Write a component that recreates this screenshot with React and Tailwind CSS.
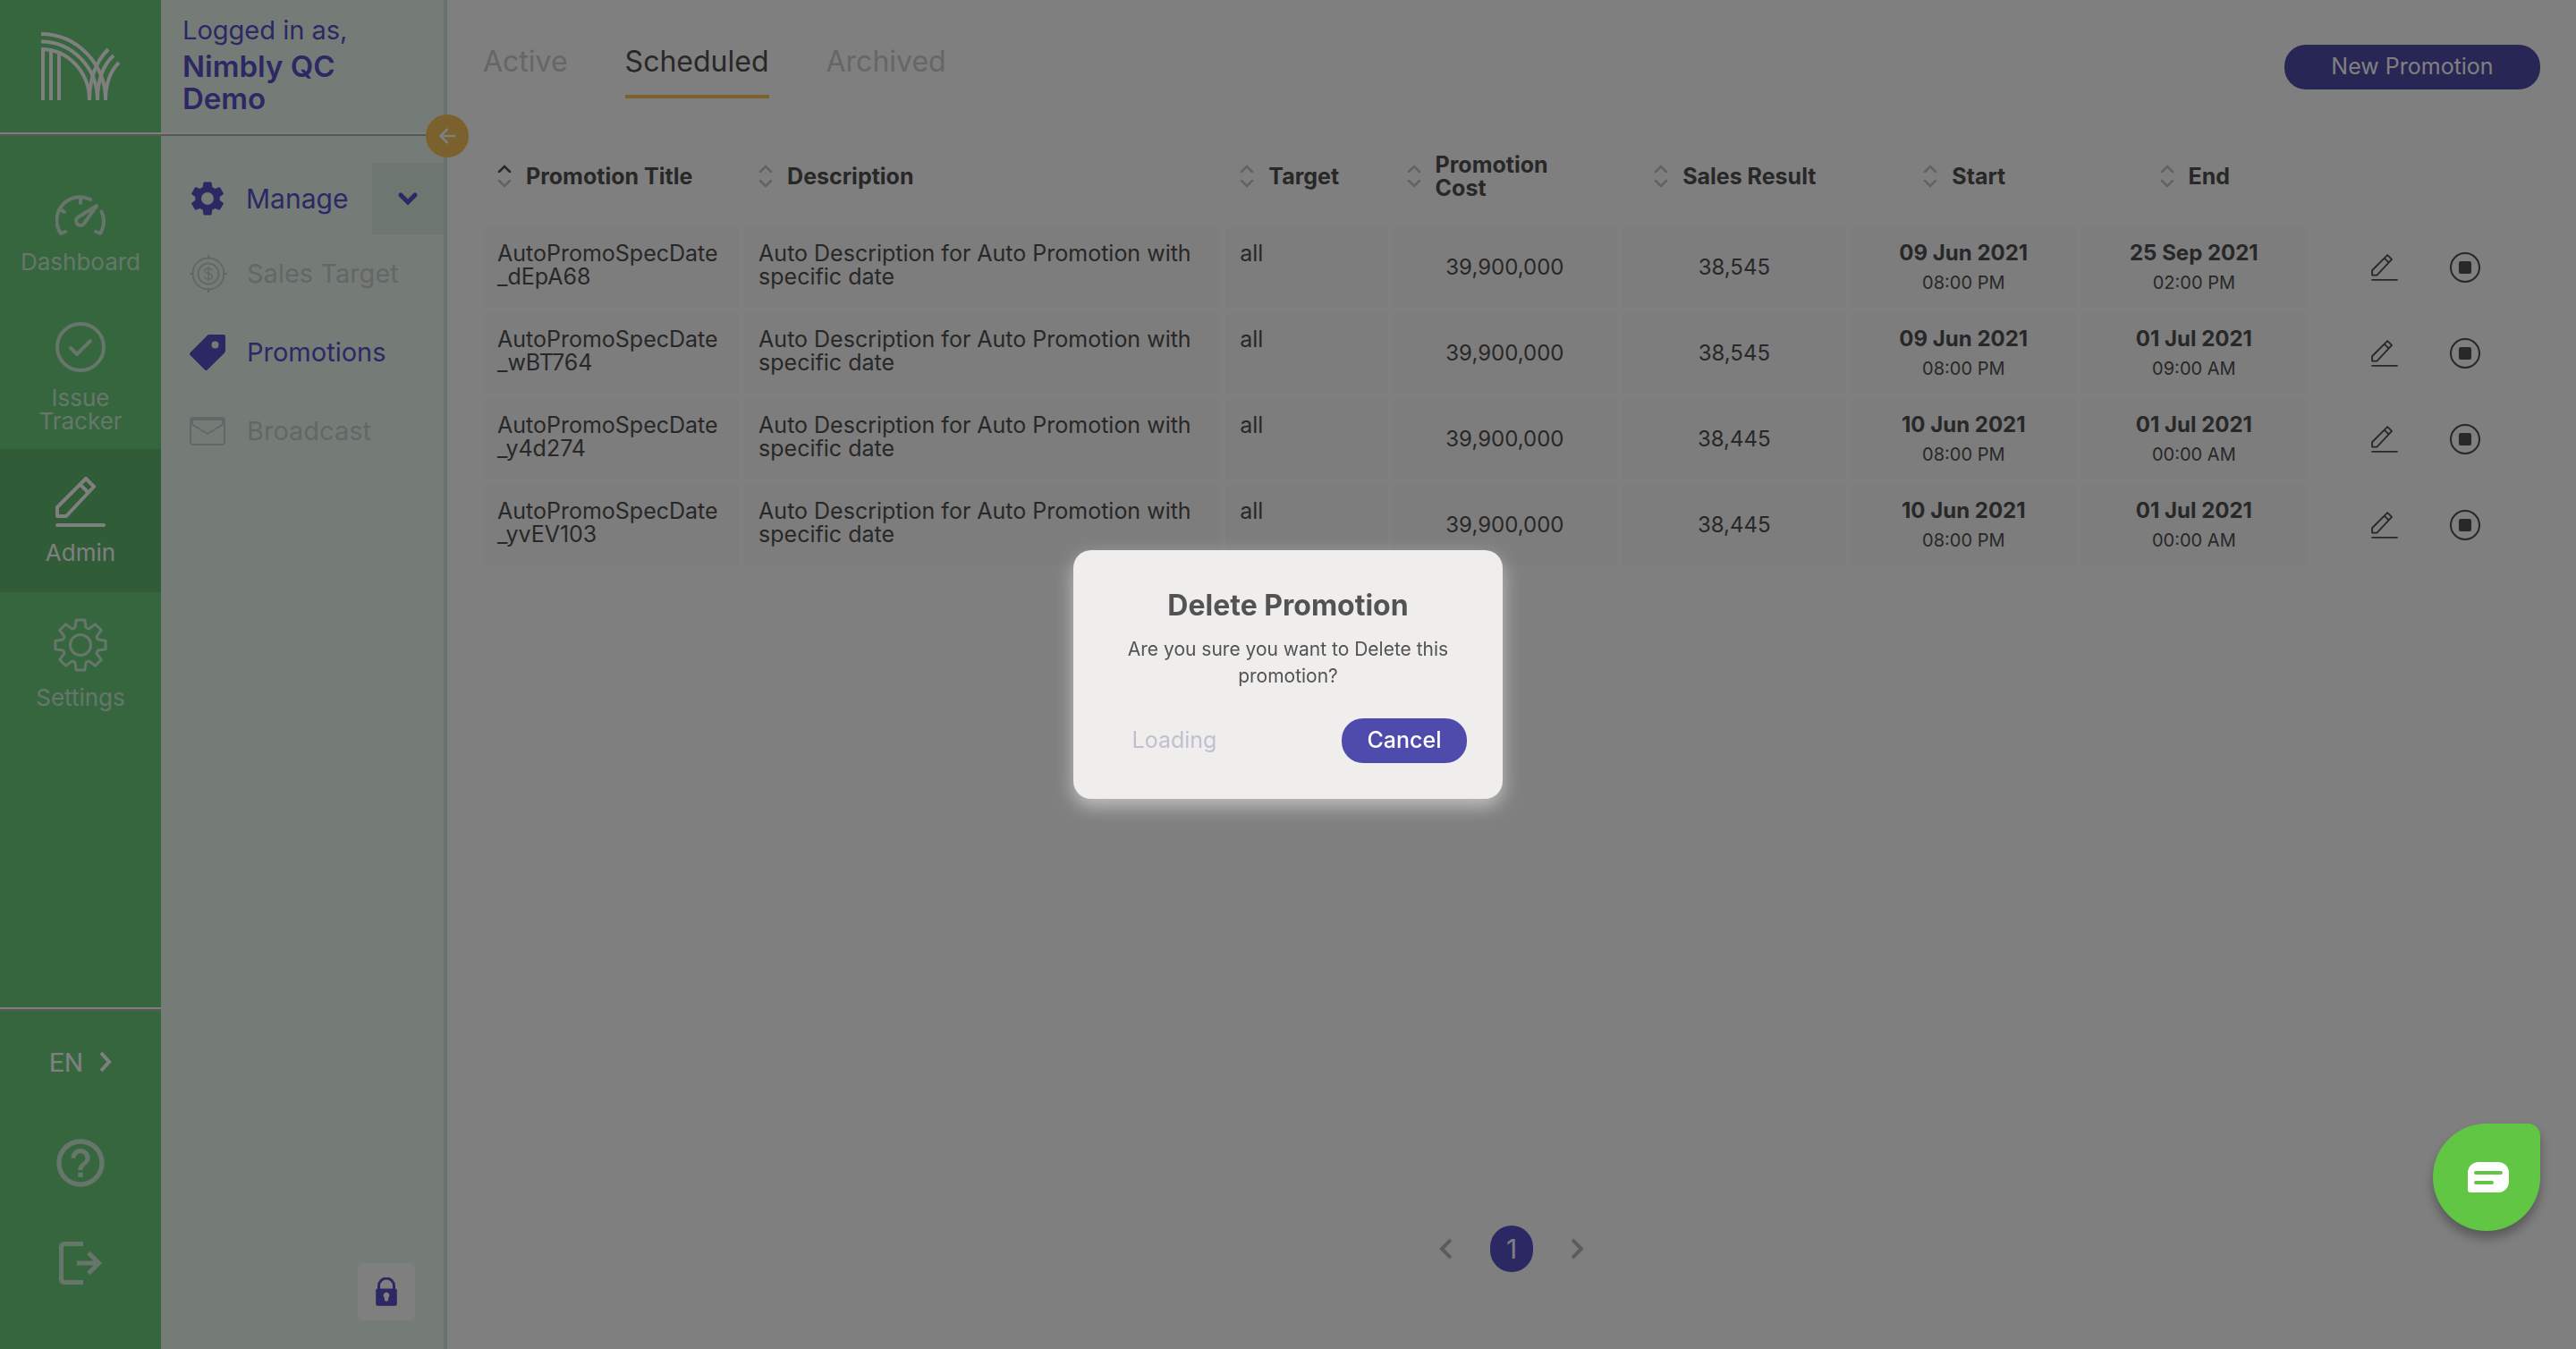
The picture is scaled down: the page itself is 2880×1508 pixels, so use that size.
import { MdSettings, MdHelpOutline } from "react-icons/md";

const promotions = [
  { title: ["AutoPromoSpecDate", "_dEpA68"], sales: "38,545", start: ["09 Jun 2021", "08:00 PM"], end: ["25 Sep 2021", "02:00 PM"] },
  { title: ["AutoPromoSpecDate", "_wBT764"], sales: "38,545", start: ["09 Jun 2021", "08:00 PM"], end: ["01 Jul 2021", "09:00 AM"] },
  { title: ["AutoPromoSpecDate", "_y4d274"], sales: "38,445", start: ["10 Jun 2021", "08:00 PM"], end: ["01 Jul 2021", "00:00 AM"] },
  { title: ["AutoPromoSpecDate", "_yvEV103"], sales: "38,445", start: ["10 Jun 2021", "08:00 PM"], end: ["01 Jul 2021", "00:00 AM"] },
];

function Logo() {
  return (
    <svg viewBox="0 0 88 76" className="h-[76px] w-[88px]" fill="none" stroke="currentColor" strokeWidth="4" aria-label="Nimbly">
      <path d="M2 19V76M11 19V76M20 21V76" />
      <path d="M0 2A72 74 0 0 1 72 76M0 10.500A63 65.500 0 0 1 63 76M0 19A54 57 0 0 1 54 76" />
      <path d="M54 76C54 50 62 32 75 19M63 76C63 54 69 37 81 26M72 76C72 58 77 44 87 34" />
    </svg>
  );
}

function GaugeIcon() {
  return (
    <svg viewBox="0 0 56 46" className="h-[46px] w-14" fill="none" stroke="currentColor" strokeWidth="4" strokeLinecap="round" strokeLinejoin="round">
      <path d="M11 41l-5 2A26 26 0 0 1 39 5" />
      <path d="M51.500 18.500A26 26 0 0 1 50 43l-5-2" />
      <path d="M28 4v5M5 16l5 3" />
      <path d="M46 12L25 25a5 5 0 1 0 7 7z" />
    </svg>
  );
}

function CheckCircleIcon() {
  return (
    <svg viewBox="0 0 56 56" className="size-14" fill="none" stroke="currentColor" strokeWidth="4" strokeLinecap="round" strokeLinejoin="round">
      <circle cx="28" cy="28" r="26" />
      <path d="M17 29l7 7 15-15" />
    </svg>
  );
}

function PencilIcon({ className, strokeWidth }) {
  return (
    <svg viewBox="0 0 56 56" className={className} fill="none" stroke="currentColor" strokeWidth={strokeWidth} strokeLinecap="round" strokeLinejoin="round">
      <path d="M2 54h52" />
      <path d="M2 34L34 2l9 9L12 44H2zM28 9l8.500 8.500" />
    </svg>
  );
}

const gearPath = (() => {
  const point = (r, a) => `${(30 + r * Math.cos(a)).toFixed(1)} ${(30 + r * Math.sin(a)).toFixed(1)}`;
  const parts = [];
  for (let i = 0; i < 8; i += 1) {
    const a = (i * Math.PI) / 4;
    parts.push(point(20.5, a - 0.3), point(28.5, a - 0.17), point(28.5, a + 0.17), point(20.5, a + 0.3), point(20, a + Math.PI / 8));
  }
  return `M${parts.join("L")}Z`;
})();

function GearIcon() {
  return (
    <svg viewBox="0 0 60 60" className="size-[60px]" fill="none" stroke="currentColor" strokeWidth="3" strokeLinejoin="round">
      <path d={gearPath} />
      <circle cx="30" cy="30" r="11.500" />
    </svg>
  );
}

function TargetIcon() {
  return (
    <svg viewBox="0 0 42 42" className="size-[42px]" fill="none" stroke="currentColor" strokeWidth="2">
      <circle cx="21" cy="21" r="17.500" />
      <circle cx="21" cy="21" r="11.500" />
      <path d="M21 0v5M21 37v5M0 21h5M37 21h5" />
      <path d="M25 17.500c-.6-1.700-2-2.500-4-2.500-2.400 0-4 1.100-4 3 0 4.200 8.200 1.800 8.200 6 0 2-1.800 3-4.200 3-2.300 0-4-1-4.300-3M21 13v16" strokeWidth="1.500" />
    </svg>
  );
}

function TagIcon() {
  return (
    <svg viewBox="0 0 40 40" className="size-10" fill="currentColor">
      <path fillRule="evenodd" d="M.6 20.300L19.500 1.200A4 4 0 0 1 22.300 0H38a2 2 0 0 1 2 2v16a4 4 0 0 1-1.200 2.800L19.700 39.500a1.800 1.800 0 0 1-2.600 0L.6 22.900a1.800 1.800 0 0 1 0-2.600zM28.500 7.500a4 4 0 1 0 0 8 4 4 0 0 0 0-8z" />
    </svg>
  );
}

function MailIcon() {
  return (
    <svg viewBox="0 0 40 32" className="h-8 w-10" fill="none" stroke="currentColor" strokeWidth="2" strokeLinejoin="round">
      <rect x="1" y="1" width="38" height="30" rx="2.500" />
      <path d="M2 2.500h36" strokeWidth="3" />
      <path d="M3 8.500L20 19 37 8.500M3 3v6M37 3v6" />
    </svg>
  );
}

function LogoutIcon() {
  return (
    <svg viewBox="0 0 48 48" className="size-12" fill="none" stroke="currentColor" strokeWidth="5">
      <path d="M27 2.500H5.500a3 3 0 0 0-3 3v37a3 3 0 0 0 3 3H27" />
      <path d="M20 24h24M33 12.500L44.500 24 33 35.500" />
    </svg>
  );
}

function LockIcon() {
  return (
    <svg viewBox="0 0 24 32" className="h-8 w-6">
      <path d="M3.500 14V9.500a8.500 8.500 0 0 1 17 0V14" fill="none" stroke="currentColor" strokeWidth="3" />
      <path fillRule="evenodd" fill="currentColor" d="M2 12.500h20a1.800 1.800 0 0 1 1.800 1.800v15.500A2 2 0 0 1 22 31.800H2A2 2 0 0 1 .2 29.800V14.300A1.800 1.800 0 0 1 2 12.500zM12 16.500a3.600 3.600 0 0 0-2.200 6.300V24.500a2.200 2.200 0 0 0 4.400 0v-1.700A3.600 3.600 0 0 0 12 16.500z" />
    </svg>
  );
}

function Chevron({ className, strokeWidth, d, viewBox, round }) {
  return (
    <svg viewBox={viewBox} className={className} fill="none" stroke="currentColor" strokeWidth={strokeWidth} strokeLinecap={round ? "round" : "butt"}>
      <path d={d} />
    </svg>
  );
}

function SortIcon({ active }) {
  return (
    <span className="flex shrink-0 flex-col gap-2">
      <Chevron viewBox="0 0 16 9" className={active ? "h-[9px] w-4 text-[#505050]" : "h-[9px] w-4 text-[#c4c4c4]"} strokeWidth="2.500" d="M2 8l6-6 6 6" round />
      <Chevron viewBox="0 0 16 9" className="h-[9px] w-4 text-[#c4c4c4]" strokeWidth="2.500" d="M2 1l6 6 6-6" round />
    </span>
  );
}

function StopIcon() {
  return (
    <svg viewBox="0 0 34 34" className="size-[34px]">
      <circle cx="17" cy="17" r="16" fill="none" stroke="currentColor" strokeWidth="2" />
      <rect x="10" y="10" width="14" height="14" rx="2" fill="currentColor" />
    </svg>
  );
}

function RailItem({ icon, label, active }) {
  return (
    <a
      href="#"
      className={
        active
          ? "flex h-40 flex-col items-center justify-center gap-4 bg-[#60b870] px-4 text-center text-[26px] leading-[26px] text-white"
          : "flex h-40 flex-col items-center justify-center gap-4 px-4 text-center text-[26px] leading-[26px] text-[#ccecd4]"
      }
    >
      {icon}
      <span>{label}</span>
    </a>
  );
}

function Rule() {
  return <hr className="border-t-2 border-b-2 border-t-white border-b-[#b0b0b0]" />;
}

function Rail() {
  return (
    <aside className="flex w-[180px] shrink-0 flex-col bg-[#6ccc7c]">
      <a href="#" className="flex h-[148px] items-center justify-center text-white">
        <Logo />
      </a>
      <Rule />
      <nav className="pt-[30px]">
        <RailItem icon={<GaugeIcon />} label="Dashboard" />
        <RailItem icon={<CheckCircleIcon />} label={<>Issue<br />Tracker</>} />
        <RailItem icon={<PencilIcon className="size-14" strokeWidth="4" />} label="Admin" active />
        <RailItem icon={<GearIcon />} label="Settings" />
      </nav>
      <div className="mt-auto">
        <Rule />
        <div className="flex flex-col items-center pt-9 pb-[72px] text-[#ccecd4]">
          <button type="button" className="flex h-[42px] items-center gap-[18px] font-[Roboto,sans-serif] text-[30px] text-white">
            EN
            <Chevron viewBox="0 0 14 24" className="h-6 w-[14px]" strokeWidth="4" d="M2 2l9 10-9 10" />
          </button>
          <button type="button" aria-label="Help" className="mt-[60px]">
            <MdHelpOutline className="size-16" />
          </button>
          <button type="button" aria-label="Log out" className="mt-14">
            <LogoutIcon />
          </button>
        </div>
      </div>
    </aside>
  );
}

function PanelItem({ icon, label, muted }) {
  return (
    <a
      href="#"
      className={
        muted
          ? "flex h-[88px] items-center gap-[22px] pl-8 text-[29px] text-[#c9cfcb]"
          : "flex h-[88px] items-center gap-[22px] pl-8 text-[29px] text-[#5650c8]"
      }
    >
      <span className="flex w-[42px]">{icon}</span>
      {label}
    </a>
  );
}

function Panel() {
  return (
    <aside className="relative flex w-80 shrink-0 flex-col border-r-4 border-[#d6e2da] bg-[#eaf8ee]">
      <div className="h-[148px] pt-4 pl-6 text-[#5650c8]">
        <p className="text-[29px] leading-[36px]">Logged in as,</p>
        <p className="mt-1 text-[33px] leading-[36px] font-semibold">
          Nimbly QC
          <br />
          Demo
        </p>
      </div>
      <Rule />
      <button type="button" aria-label="Collapse menu" className="absolute top-32 -right-7 z-10 flex size-12 items-center justify-center rounded-full bg-[#f4c25a] text-white">
        <Chevron viewBox="0 0 18 18" className="size-[18px]" strokeWidth="2.500" d="M18 9H2M9.500 1L1.500 9l8 8" />
      </button>
      <nav className="pt-[30px]">
        <div className="flex h-20 items-center text-[#5650c8]">
          <a href="#" className="flex flex-1 items-center gap-5 pl-[29px] text-[30px]">
            <MdSettings className="size-[46px] shrink-0" />
            Manage
          </a>
          <button type="button" aria-label="Toggle manage" className="flex size-20 shrink-0 items-center justify-center bg-[#dcece0]">
            <Chevron viewBox="0 0 24 16" className="h-4 w-6" strokeWidth="5" d="M4 4l8 8 8-8" round />
          </button>
        </div>
        <PanelItem icon={<TargetIcon />} label="Sales Target" muted />
        <PanelItem icon={<TagIcon />} label="Promotions" />
        <PanelItem icon={<MailIcon />} label="Broadcast" muted />
      </nav>
      <button type="button" aria-label="Lock menu" className="mt-auto mr-8 mb-8 flex size-16 items-center justify-center self-end rounded-md bg-white text-[#5650c8]">
        <LockIcon />
      </button>
    </aside>
  );
}

function HeadCell({ label, className, center, active }) {
  return (
    <th scope="col" className={className}>
      <button type="button" className={center ? "flex w-full items-center justify-center gap-4 pr-5 pl-4 text-left font-bold" : "flex w-full items-center gap-4 pl-4 text-left font-bold"}>
        <SortIcon active={active} />
        <span>{label}</span>
      </button>
    </th>
  );
}

const cell = "h-24 border-r-6 border-b-6 border-transparent bg-[#fafafa] bg-clip-padding px-4";

function DateCell({ value }) {
  return (
    <td className={`${cell} pt-4 text-center align-top`}>
      <div className="font-bold">{value[0]}</div>
      <div className="mt-1 text-[20px] leading-[32px]">{value[1]}</div>
    </td>
  );
}

function PromotionTable() {
  return (
    <table className="mt-[30px] w-full table-fixed border-separate border-spacing-0 text-[24px] leading-[26px] text-[#505050]">
      <thead>
        <tr className="h-[114px] text-[25px]">
          <HeadCell label="Promotion Title" className="w-[12.7%]" active />
          <HeadCell label="Description" className="w-[23.4%]" />
          <HeadCell label="Target" className="w-[8.1%]" />
          <HeadCell label={<>Promotion<br />Cost</>} className="w-[11.2%]" />
          <HeadCell label="Sales Result" className="w-[11.1%]" center />
          <HeadCell label="Start" className="w-[11.2%]" center />
          <HeadCell label="End" className="w-[11.2%]" center />
          <th scope="col" aria-label="Actions" />
        </tr>
      </thead>
      <tbody>
        {promotions.map((p) => (
          <tr key={p.title[1]}>
            <td className={`${cell} pt-4 align-top text-[25px]`}>
              {p.title[0]}
              <br />
              {p.title[1]}
            </td>
            <td className={`${cell} pt-4 align-top text-[25px]`}>
              Auto Description for Auto Promotion with
              <br />
              specific date
            </td>
            <td className={`${cell} pt-4 align-top text-[25px]`}>all</td>
            <td className={`${cell} text-center`}>39,900,000</td>
            <td className={`${cell} text-center`}>{p.sales}</td>
            <DateCell value={p.start} />
            <DateCell value={p.end} />
            <td className="border-b-6 border-transparent">
              <div className="flex items-center justify-center gap-[58px]">
                <button type="button" aria-label="Edit promotion">
                  <PencilIcon className="size-[30px]" strokeWidth="3.500" />
                </button>
                <button type="button" aria-label="Stop promotion">
                  <StopIcon />
                </button>
              </div>
            </td>
          </tr>
        ))}
      </tbody>
    </table>
  );
}

function Main() {
  return (
    <main className="flex min-w-0 flex-1 flex-col bg-white px-10">
      <div className="flex h-[110px] items-start justify-between">
        <div role="tablist" className="flex h-[110px] gap-16 text-[32px] leading-[40px] text-[#cccccc]">
          <button type="button" role="tab" aria-selected="false" className="flex pt-[49px]">Active</button>
          <button type="button" role="tab" aria-selected="true" className="flex border-b-4 border-[#f4c25a] pt-[49px] text-[#505050]">Scheduled</button>
          <button type="button" role="tab" aria-selected="false" className="flex pt-[49px]">Archived</button>
        </div>
        <button type="button" className="mt-[50px] h-[50px] w-[286px] rounded-[24px] bg-[#504caa] text-[25px] text-white">New Promotion</button>
      </div>
      <PromotionTable />
      <nav aria-label="Pagination" className="mt-auto mb-[86px] flex items-center justify-center gap-[43px] text-[#b8b8b8]">
        <button type="button" aria-label="Previous page">
          <Chevron viewBox="0 0 14 24" className="h-6 w-[14px]" strokeWidth="4" d="M13 2L3 12l10 10" />
        </button>
        <button type="button" className="h-[52px] w-12 rounded-[24px] bg-[#5650c8] text-[30px] text-white">1</button>
        <button type="button" aria-label="Next page">
          <Chevron viewBox="0 0 14 24" className="h-6 w-[14px]" strokeWidth="4" d="M1 2l10 10L1 22" />
        </button>
      </nav>
    </main>
  );
}

function DeleteDialog() {
  return (
    <div className="fixed inset-0 z-20 flex items-center justify-center bg-black/50">
      <div role="dialog" aria-modal="true" aria-labelledby="delete-title" className="w-[480px] rounded-[20px] bg-[#efeeed] px-10 pt-10 pb-10 text-center text-[#535353] shadow-[0_8px_20px_rgba(239,238,237,0.6)]">
        <h2 id="delete-title" className="text-[32px] leading-[44px] font-bold">Delete Promotion</h2>
        <p className="mt-3 text-[21px] leading-[30px]">
          Are you sure you want to Delete this
          <br />
          promotion?
        </p>
        <div className="mt-8 flex justify-between">
          <button type="button" disabled className="h-[50px] w-[146px] text-[25px] text-[#c1c0cf]">Loading</button>
          <button type="button" className="h-[50px] w-[140px] rounded-[24px] bg-[#4e4bac] text-[25px] font-medium text-white">Cancel</button>
        </div>
      </div>
    </div>
  );
}

function ChatButton() {
  return (
    <button type="button" aria-label="Open chat" className="fixed right-10 bottom-[132px] z-30 flex size-[120px] items-center justify-center rounded-[60px] rounded-tr-[14px] bg-[#60c644] shadow-[0_8px_12px_rgba(0,0,0,0.3)]">
      <svg viewBox="0 0 46 34" className="ml-1 h-[34px] w-[46px]">
        <path d="M12 0h22a12 12 0 0 1 12 12v10a12 12 0 0 1-12 12H3a3 3 0 0 1-3-3V12A12 12 0 0 1 12 0z" fill="#ffffff" />
        <path d="M9 12h28M9 23h18" stroke="#60c644" strokeWidth="4" strokeLinecap="round" />
      </svg>
    </button>
  );
}

export default function App() {
  return (
    <div className="flex min-h-screen font-[Inter,sans-serif]">
      <Rail />
      <Panel />
      <Main />
      <DeleteDialog />
      <ChatButton />
    </div>
  );
}
